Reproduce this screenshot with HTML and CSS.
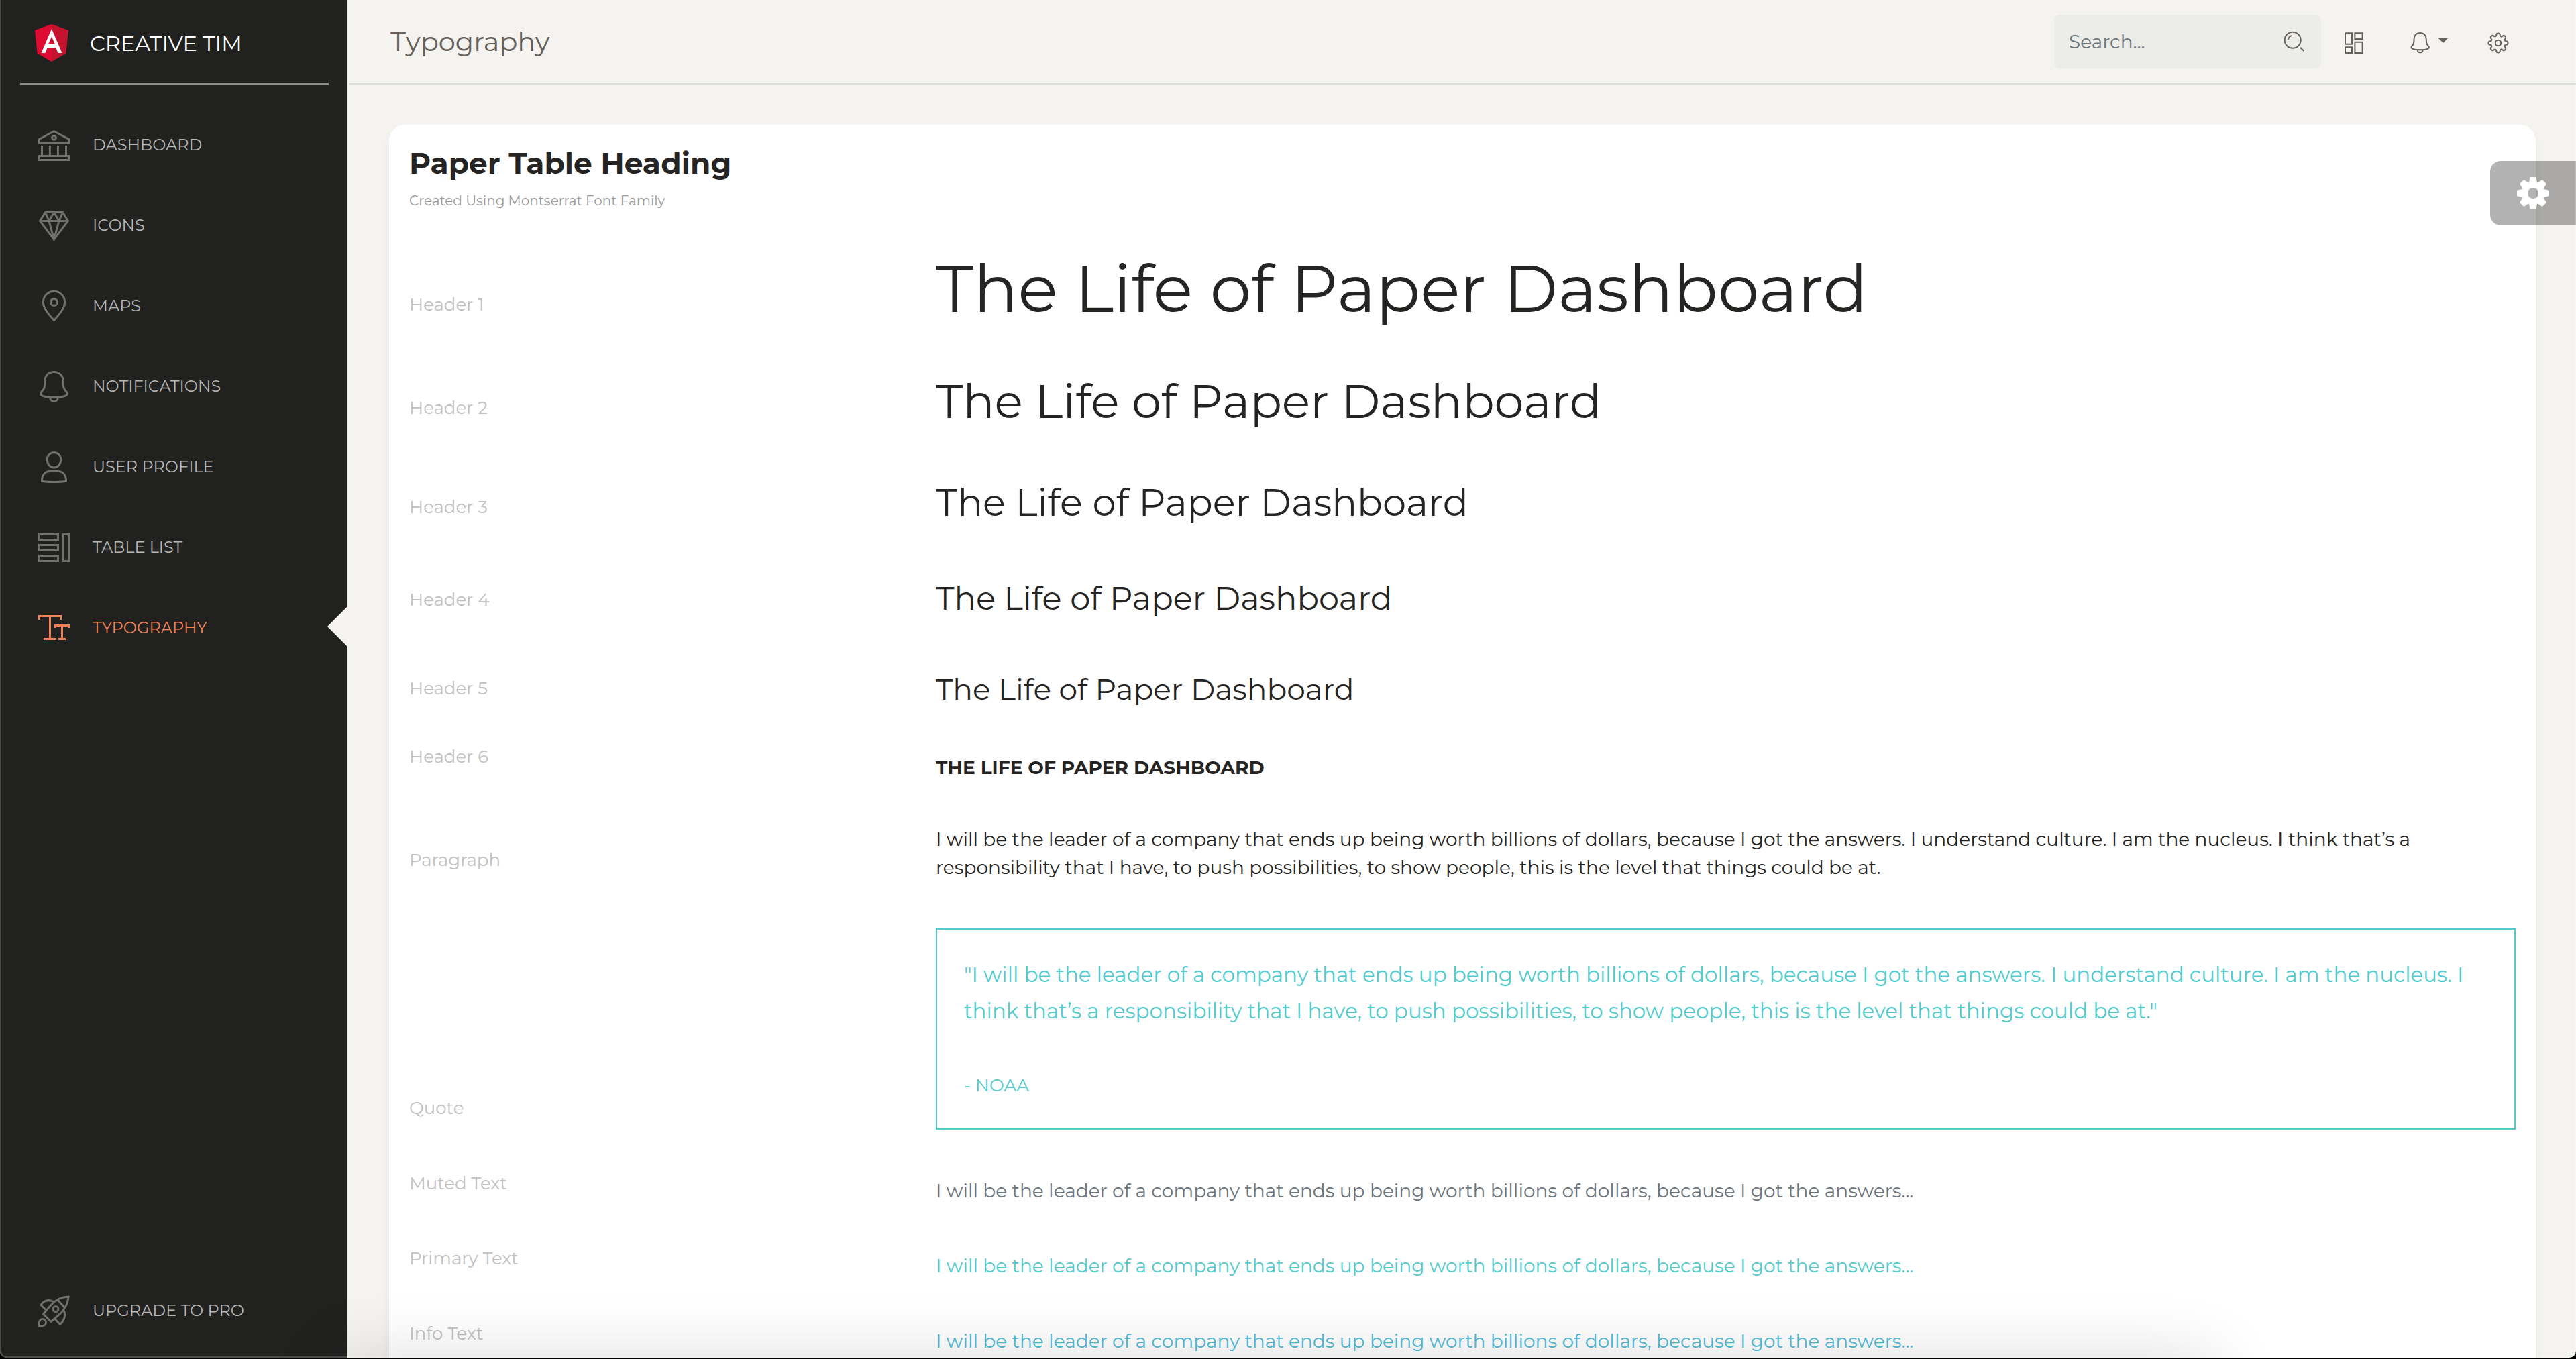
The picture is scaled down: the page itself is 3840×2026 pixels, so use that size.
FILE: index.html
```html
<!DOCTYPE html>
<html lang="en">
<head>
<meta charset="utf-8">
<meta name="viewport" content="width=device-width, initial-scale=1">
<title>Typography - Paper Dashboard</title>
<link rel="stylesheet" href="styles.css">
</head>
<body>
<div class="window">
  <aside class="sidebar">
    <a class="brand" href="#">
      <svg class="brand-logo" viewBox="0 0 50 56" aria-hidden="true">
        <path fill="#dd0b31" d="M25 0 0 9l3.600 34.500L25 56z"/>
        <path fill="#c3132f" d="M25 0v56l21.400-12.500L50 9z"/>
        <path fill="#fff" d="M25 7 9.500 43h6l3.200-8h12.600l3.200 8h6zM25 18.500 30 30H20z" fill-rule="evenodd"/>
      </svg>
      <span>CREATIVE TIM</span>
    </a>
    <nav class="nav" aria-label="Main">
      <a class="nav-link" href="#">
        <svg class="icon" viewBox="0 0 48 48" aria-hidden="true"><path d="M2.500 15.500 24.500 3.700l22 11.800V21h-44zM6.500 25v14M18.300 25v14M30.400 25v14M42.500 25v14M2.500 40.500h44v6h-44z"/><circle cx="24.500" cy="13.300" r="3"/></svg>
        <span class="nav-text">DASHBOARD</span>
      </a>
      <a class="nav-link" href="#">
        <svg class="icon" viewBox="0 0 48 48" aria-hidden="true"><path d="M11.500 4.500h26l8 13-21 27.500-21-27.500zM3.500 17.500h42M11.500 4.500l5.500 13 7.500-13 7.500 13 5.500-13M17 17.500 24.500 45 32 17.500"/></svg>
        <span class="nav-text">ICONS</span>
      </a>
      <a class="nav-link" href="#">
        <svg class="icon" viewBox="0 0 48 48" aria-hidden="true"><path d="M24.500 45.500C18 38 8.400 28 8.400 18.400a16.100 16.100 0 0 1 32.200 0C40.600 28 31 38 24.500 45.500z"/><circle cx="24.500" cy="18.400" r="5"/></svg>
        <span class="nav-text">MAPS</span>
      </a>
      <a class="nav-link" href="#">
        <svg class="icon" viewBox="0 0 48 48" aria-hidden="true"><path id="bell" d="M24.500 2.500c-9 0-13.700 6.500-13.700 14C10.800 27 9.500 28 6 32c-5 6 4 8.300 18.500 8.300S48 38 43 32c-3.500-4-4.800-5-4.800-15.500 0-7.500-4.700-14-13.700-14zM18.500 41c1 7.500 11 7.500 12 0"/></svg>
        <span class="nav-text">NOTIFICATIONS</span>
      </a>
      <a class="nav-link" href="#">
        <svg class="icon" viewBox="0 0 48 48" aria-hidden="true"><path d="M24.500 2.500c6 0 10.200 5 10.200 11 0 6.500-4.700 11.500-10.200 11.500s-10.200-5-10.200-11.500c0-6 4.200-11 10.200-11zM6.500 45c0-9 4.500-14.500 12.500-14.500h11C38 30.500 42.500 36 42.500 45c-6.500 2-29.500 2-36 0z"/></svg>
        <span class="nav-text">USER PROFILE</span>
      </a>
      <a class="nav-link" href="#">
        <svg class="icon" viewBox="0 0 48 48" aria-hidden="true"><path d="M2.500 4.500h28v8h-28zM2.500 20.500h28v8h-28zM2.500 36.500h28v8h-28zM38.500 4.500h8v40h-8z"/></svg>
        <span class="nav-text">TABLE LIST</span>
      </a>
      <a class="nav-link active" href="#" aria-current="page">
        <svg class="icon" viewBox="0 0 48 48" aria-hidden="true"><path d="M2.500 12V6.500h32V12M18.500 6.500v34M9 40.500h19M26.500 24v-3.500h20V24M36.500 20.500v20M31 40.500h11"/></svg>
        <span class="nav-text">TYPOGRAPHY</span>
      </a>
      <a class="nav-link upgrade" href="#">
        <svg class="icon" viewBox="0 0 48 48" aria-hidden="true"><path d="M46 3C34 3.500 27 8 20.500 15l-12 14L20 40.500 34.500 28C42 20 45.500 13 46 3zM30 8l11 12M24 10.500C15 6.500 9 9 5 15.500l7 7M26 36.500l7.500 8C40 39 42 31 39.500 24.500M2.500 46.500v-5a5 5 0 1 1 5 5z"/><circle cx="27" cy="21.500" r="4"/></svg>
        <span class="nav-text">UPGRADE TO PRO</span>
      </a>
    </nav>
  </aside>

  <div class="main">
    <header class="topbar">
      <a class="page-title" href="#">Typography</a>
      <form class="search" role="search">
        <input class="search-input" type="text" placeholder="Search..." aria-label="Search">
        <svg class="icon icon-small" viewBox="0 0 36 36" aria-hidden="true"><circle cx="15.700" cy="15.700" r="12"/><path d="M9 15a6.500 6.500 0 0 1 6-6M27 26.700l5.300 5.300"/></svg>
      </form>
      <button class="tool" type="button" aria-label="Stats">
        <svg class="icon icon-small" viewBox="0 0 36 36" aria-hidden="true"><path d="M4 5.300h10v16.400H4zM18.400 5.300h11.200v8.700H18.400zM4 26.300h10V35H4zM18.400 18.700h11.200V35H18.400z"/></svg>
      </button>
      <button class="tool tool-bell" type="button" aria-label="Notifications">
        <svg class="icon icon-bell" viewBox="-2 -5 54 54" aria-hidden="true"><use href="#bell"/></svg>
        <span class="caret"></span>
      </button>
      <button class="tool" type="button" aria-label="Account">
        <svg class="icon icon-small" viewBox="-18 -20 36 36" aria-hidden="true"><path d="M-2.800-11.700A2.800 2.800 0 0 1 2.800-11.700 2 2 0 0 0 6.290-10.250 2.800 2.800 0 0 1 10.250-6.290 2 2 0 0 0 11.700-2.800 2.800 2.800 0 0 1 11.700 2.800 2 2 0 0 0 10.250 6.290 2.800 2.800 0 0 1 6.290 10.250 2 2 0 0 0 2.800 11.700 2.800 2.800 0 0 1-2.800 11.700 2 2 0 0 0-6.290 10.250 2.800 2.800 0 0 1-10.250 6.290 2 2 0 0 0-11.700 2.800 2.800 2.800 0 0 1-11.700-2.800 2 2 0 0 0-10.250-6.290 2.800 2.800 0 0 1-6.290-10.250 2 2 0 0 0-2.800-11.700z"/><circle r="4.200"/></svg>
      </button>
    </header>

    <main class="content">
      <section class="card">
        <div class="card-header">
          <h2 class="card-title">Paper Table Heading</h2>
          <p class="card-category">Created Using Montserrat Font Family</p>
        </div>
        <div class="lines">
          <div class="line"><span class="label">Header 1</span><h1 class="h1">The Life of Paper Dashboard</h1></div>
          <div class="line"><span class="label">Header 2</span><h2 class="h2">The Life of Paper Dashboard</h2></div>
          <div class="line"><span class="label">Header 3</span><h3 class="h3">The Life of Paper Dashboard</h3></div>
          <div class="line"><span class="label">Header 4</span><h4 class="h4">The Life of Paper Dashboard</h4></div>
          <div class="line"><span class="label">Header 5</span><h5 class="h5">The Life of Paper Dashboard</h5></div>
          <div class="line"><span class="label">Header 6</span><h6 class="h6">The Life of Paper Dashboard</h6></div>
          <div class="line"><span class="label">Paragraph</span>
            <p class="text">I will be the leader of a company that ends up being worth billions of dollars, because I got the answers. I understand culture. I am the nucleus. I think that’s a responsibility that I have, to push possibilities, to show people, this is the level that things could be at.</p></div>
          <div class="line"><span class="label">Quote</span>
            <blockquote class="quote">
              <p class="quote-text">"I will be the leader of a company that ends up being worth billions of dollars, because I got the answers. I understand culture. I am the nucleus. I think that’s a responsibility that I have, to push possibilities, to show people, this is the level that things could be at."</p>
              <footer class="quote-author">- NOAA</footer>
            </blockquote></div>
          <div class="line"><span class="label">Muted Text</span><p class="text muted">I will be the leader of a company that ends up being worth billions of dollars, because I got the answers...</p></div>
          <div class="line"><span class="label">Primary Text</span><p class="text primary">I will be the leader of a company that ends up being worth billions of dollars, because I got the answers...</p></div>
          <div class="line"><span class="label">Info Text</span><p class="text info">I will be the leader of a company that ends up being worth billions of dollars, because I got the answers...</p></div>
        </div>
      </section>
    </main>
  </div>

  <button class="settings" type="button" aria-label="Theme settings">
    <svg class="settings-icon" viewBox="-24 -24 48 48" aria-hidden="true">
      <circle r="12.500" fill="none" stroke="#fff" stroke-width="9"/>
      <g fill="#fff">
        <path id="teeth" d="M-6-15.500-4.600-23q.2-1 1.200-1h6.800q1 0 1.200 1L6-15.500zM-6 15.500-4.600 23q.2 1 1.200 1h6.800q1 0 1.200-1L6 15.500z"/>
        <use href="#teeth" transform="rotate(45)"/>
        <use href="#teeth" transform="rotate(90)"/>
        <use href="#teeth" transform="rotate(135)"/>
      </g>
    </svg>
  </button>
</div>
</body>
</html>
```
FILE: styles.css
```css
*,
*::before,
*::after {
  box-sizing: border-box;
}

html {
  background: #000;
}

body {
  margin: 0;
  height: 100vh;
  padding-bottom: 2px;
  background: #000;
  overflow: hidden;
  color: #252422;
  font-family: "Montserrat", "Inter", sans-serif;
  font-size: 28px;
}

h1, h2, h3, h4, h5, h6, p, blockquote {
  margin: 0;
  font-weight: 400;
}

a {
  color: inherit;
  text-decoration: none;
}

button {
  border: 0;
  padding: 0;
  background: none;
  color: inherit;
  font: inherit;
  cursor: pointer;
}

.window {
  position: relative;
  display: flex;
  height: 100%;
  overflow: hidden;
  border-radius: 0 0 10px 10px;
  background: #f4f3ef;
}

/* soft shade rising from the lower edge */
.window::before {
  content: "";
  position: absolute;
  z-index: 2;
  top: 100%;
  left: 13%;
  right: 14%;
  height: 100px;
  box-shadow: 0 0 100px rgba(0, 0, 0, .14);
  pointer-events: none;
}

/* thin light rim of the window */
.window::after {
  content: "";
  position: absolute;
  z-index: 3;
  inset: 0;
  border: 2px solid rgba(255, 255, 255, .2);
  border-top: 0;
  border-radius: 0 0 10px 10px;
  pointer-events: none;
}

.icon {
  flex: none;
  width: 48px;
  height: 48px;
  fill: none;
  stroke: currentColor;
  stroke-width: 3;
}

.icon-small {
  width: 36px;
  height: 36px;
  stroke-width: 2;
}

.icon-bell {
  width: 36px;
  height: 36px;
}

/* Sidebar */

.sidebar {
  flex: none;
  display: flex;
  flex-direction: column;
  width: 518px;
  margin-right: 2px;
  background: #212120;
}

.brand {
  display: flex;
  align-items: center;
  gap: 32px;
  height: 126px;
  margin: 0 28px 0 30px;
  padding: 4px 22px 0;
  border-bottom: 2px solid #8f8f8b;
  color: #fff;
  font-size: 32px;
}

.brand-logo {
  width: 50px;
  height: 56px;
}

.nav {
  flex: 1;
  display: flex;
  flex-direction: column;
  gap: 60px;
  padding: 60px 0 40px;
}

.nav-link {
  position: relative;
  display: flex;
  align-items: center;
  gap: 34px;
  height: 60px;
  padding-left: 56px;
  color: #b5b5b4;
  font-size: 24px;
}

.nav-text {
  padding-bottom: 2px;
}

.nav-link .icon {
  color: #70706f;
}

.nav-link.active,
.nav-link.active .icon {
  color: #ef8157;
}

.nav-link.active::after {
  content: "";
  position: absolute;
  right: 0;
  margin-bottom: 4px;
  border: 30px solid transparent;
  border-left-width: 0;
  border-right-color: #f4f3ef;
}

.upgrade {
  margin-top: auto;
}

/* Top bar */

.main {
  flex: 1;
  min-width: 0;
}

.topbar {
  display: flex;
  align-items: center;
  height: 126px;
  padding: 0 98px 0 62px;
  border-bottom: 2px solid #dddddd;
  color: #66615b;
}

.page-title {
  margin-right: auto;
  padding-bottom: 2px;
  font-size: 40px;
}

.search {
  display: flex;
  align-items: center;
  width: 398px;
  height: 80px;
  margin-right: 32px;
  padding: 0 22px;
  border-radius: 8px;
  background: #ecede8;
}

.search-input {
  flex: 1;
  min-width: 0;
  padding: 0;
  border: 0;
  outline: 0;
  background: none;
  color: #66615b;
  font: inherit;
}

.search-input::placeholder {
  color: #6c757d;
  opacity: 1;
}

.tool {
  display: flex;
  align-items: center;
}

.tool-bell {
  gap: 8px;
  margin: 0 56px 0 62px;
}

.caret {
  margin-bottom: 4px;
  border: 8px solid transparent;
  border-top-color: currentColor;
  border-bottom-width: 0;
}

/* Card */

.content {
  padding: 60px;
}

.card {
  padding: 28px 30px 60px;
  border-radius: 24px;
  background: #fff;
  box-shadow: 0 12px 20px -8px rgba(0, 0, 0, .15);
}

.card-title {
  font-size: 44px;
  font-weight: 700;
  line-height: 58px;
}

.card-category {
  margin-top: 12px;
  color: #9a9a9a;
  font-size: 20px;
  line-height: 30px;
}

.lines {
  display: flex;
  flex-direction: column;
  gap: 70px;
  margin-top: 60px;
}

.line {
  display: grid;
  grid-template-columns: 1fr 3fr;
  align-items: end;
}

.label {
  margin: -12px 0 20px;
  color: #c0c1c2;
  font-size: 26px;
  line-height: 24px;
}

.h1 {
  font-size: 98px;
  line-height: 112px;
}

.h2 {
  font-size: 70px;
  line-height: 84px;
}

.h3 {
  font-size: 56px;
  line-height: 78px;
}

.h4 {
  font-size: 48px;
  line-height: 68px;
}

.h5 {
  font-size: 44px;
  line-height: 62px;
}

.h6 {
  font-size: 28px;
  font-weight: 700;
  line-height: 32px;
  text-transform: uppercase;
}

.text {
  line-height: 42px;
}

.muted {
  color: #6c757d;
}

.primary {
  color: #51cbce;
}

.info {
  color: #51bcda;
}

.quote {
  padding: 40px;
  border: 2px solid #51cbce;
  color: #51cbce;
}

.quote-text {
  font-size: 31px;
  line-height: 54px;
}

.quote-author {
  margin-top: 60px;
  font-size: 26px;
  line-height: 48px;
}

/* Theme settings tab */

.settings {
  position: absolute;
  z-index: 1;
  top: 240px;
  right: 0;
  display: flex;
  align-items: center;
  width: 128px;
  height: 96px;
  padding-left: 40px;
  border-radius: 16px 0 0 16px;
  background: rgba(0, 0, 0, .3);
}

.settings-icon {
  width: 48px;
  height: 48px;
}
```
